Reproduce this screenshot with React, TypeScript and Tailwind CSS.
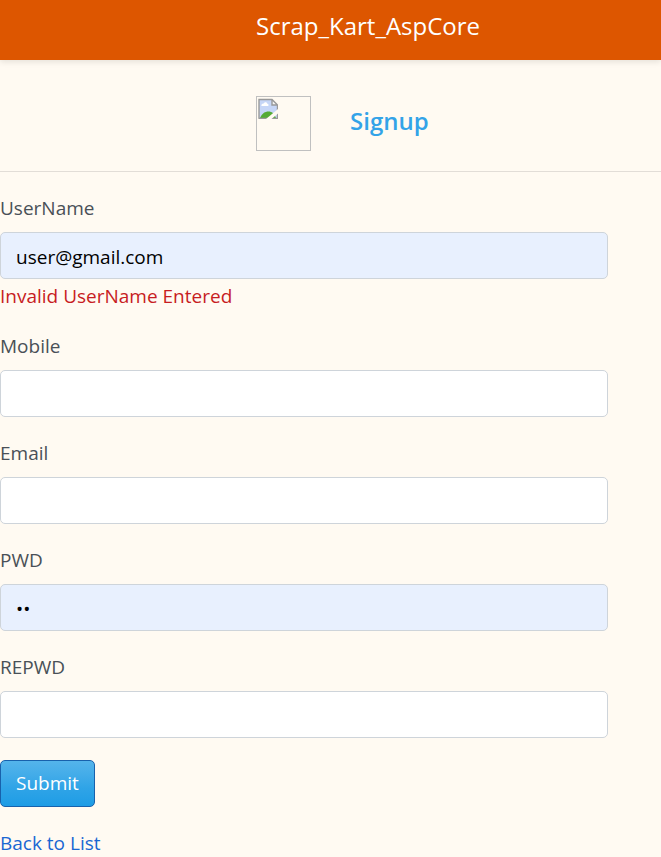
import React from "react";

type FieldProps = {
  id: string;
  label: string;
  type?: string;
  value?: string;
  error?: string;
};

function Field({ id, label, type = "text", value = "", error }: FieldProps) {
  const fill = value ? "bg-[#e8f0fe]" : "bg-white";
  return (
    <div className="flex flex-col">
      <label htmlFor={id} className="mb-[10px] leading-7 text-[#495057]">
        {label}
      </label>
      <input
        id={id}
        type={type}
        defaultValue={value}
        aria-invalid={error ? true : undefined}
        className={`h-[47px] w-[92%] rounded-[5px] border border-[#ced4da] px-[15px] pt-[2px] text-black outline-none ${fill}`}
      />
      {error && <span className="mt-[3px] leading-7 text-[#c71c22]">{error}</span>}
    </div>
  );
}

function BrokenImage() {
  return (
    <div role="img" className="size-[55px] border border-[#c0c0c0] p-px">
      <svg width="20" height="21" viewBox="0 0 20 21">
        <path d="M1 1.5H14L19.5 7V20.5H1Z" fill="#c6d6f7" />
        <path d="M3.5 8C3 6 5 5.6 5.8 5.6C6.5 3.4 9.2 4 9.3 5.7C10.8 5.7 11 8 9.8 8Z" fill="#fff" />
        <path d="M2 20C4 15.5 7 13.5 10.5 13.5C14 13.5 16 15.5 18 20Z" fill="#55ab35" />
        <path d="M14 1.5V7H19.5Z" fill="#f5f5f5" />
        <path d="M1 20.5V1.5H14L19.5 7H14V1.5M19.5 7V20.5H0.5" fill="none" stroke="#999" strokeWidth="1.4" />
        <path d="M8 21L20 11V15.5L13.5 21Z" fill="#fffaf2" />
      </svg>
    </div>
  );
}

export default function App() {
  return (
    <div className="min-h-screen bg-[#fffaf2] font-['Open_Sans','Noto_Sans',sans-serif] text-[19px]">
      <header className="h-[60px] bg-[#dd5600] pt-2 pl-64 shadow-[0_2px_6px_rgba(0,0,0,0.1)]">
        <a href="#" className="text-[24px] leading-9 text-white">
          Scrap_Kart_AspCore
        </a>
      </header>
      <div className="flex h-28 items-start gap-[39px] border-b border-[#e2ddd7] pt-9 pl-64">
        <BrokenImage />
        <h1 className="mt-[7px] text-[24px] leading-9 font-semibold text-[#33a3e8]">Signup</h1>
      </div>
      <form className="flex flex-col gap-[22px] pt-[22px]" onSubmit={(e) => e.preventDefault()}>
        <Field id="username" label="UserName" value="user@gmail.com" error="Invalid UserName Entered" />
        <Field id="mobile" label="Mobile" type="tel" />
        <Field id="email" label="Email" type="email" />
        <Field id="pwd" label="PWD" type="password" value="12" />
        <Field id="repwd" label="REPWD" type="password" />
        <button
          type="submit"
          className="h-[47px] self-start rounded-[5px] border border-[#1861ac] bg-linear-to-b from-[#54b4eb] via-[#2fa4e7] via-60% to-[#1d9ce5] px-[15px] text-white"
        >
          Submit
        </button>
        <a href="#" className="self-start leading-7 text-[#1967d2]">
          Back to List
        </a>
      </form>
    </div>
  );
}
